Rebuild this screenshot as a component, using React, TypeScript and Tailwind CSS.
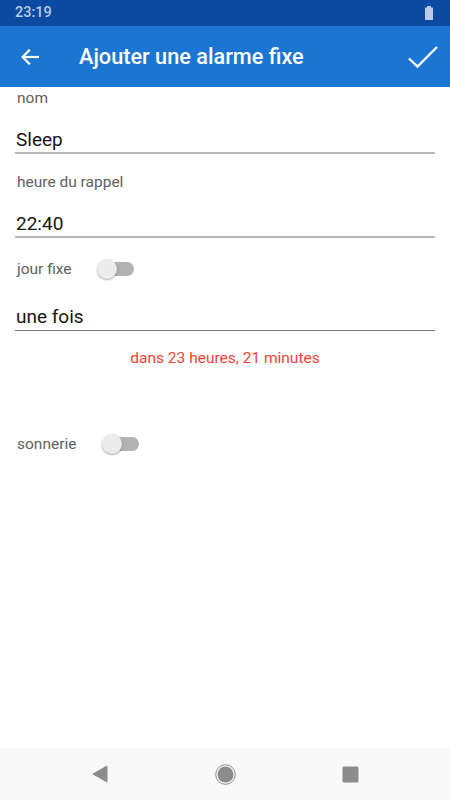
import React from "react";

function Toggle() {
  return (
    <div className="relative w-[37px] h-[22px] shrink-0">
      <div className="absolute left-[3px] right-0 top-[4px] h-[14px] rounded-full bg-[#b2b2b2]" />
      <div className="absolute left-0 top-[1px] w-[20px] h-[20px] rounded-full bg-[#ececec] shadow-[0_1px_2px_rgba(0,0,0,0.35)]" />
    </div>
  );
}

export default function App() {
  return (
    <div
      className="w-[450px] h-[800px] flex flex-col bg-white overflow-hidden"
      style={{ fontFamily: "Roboto, 'Noto Sans', sans-serif" }}
    >
      {/* status bar */}
      <div className="h-[26px] bg-[#0a4aa0] flex items-center justify-between pl-[15px] pr-[17px]">
        <span className="text-[14.5px] font-medium text-[#b9cbe6] leading-none">23:19</span>
        <svg width="8" height="14" viewBox="0 0 8 14">
          <rect x="2" y="0" width="4" height="2" fill="#b9cbe6" />
          <rect x="0" y="1.5" width="8" height="12.5" rx="0.5" fill="#b9cbe6" />
        </svg>
      </div>
      {/* app bar */}
      <div className="h-[61px] bg-[#1b76d3] flex items-center">
        <div className="w-[79px] flex items-center pl-[21px]">
          <svg width="18" height="16" viewBox="0 0 18 16" fill="none" stroke="white" strokeWidth="2.2" strokeLinecap="square">
            <path d="M17 8H2" />
            <path d="M8 1.5L1.6 8L8 14.5" />
          </svg>
        </div>
        <span className="flex-1 text-white text-[21.7px] font-medium leading-none">
          Ajouter une alarme fixe
        </span>
        <div className="pr-[12px] flex items-center">
          <svg width="30" height="22" viewBox="0 0 30 22" fill="none" stroke="white" strokeWidth="2.4">
            <path d="M1 12.5L9.5 20.5L29 1" />
          </svg>
        </div>
      </div>
      {/* content */}
      <div className="flex-1 flex flex-col px-[15px] pt-[3px]">
        <div className="pl-[2px] text-[15.5px] leading-[16px] text-[#616161]">nom</div>
        <div className="mt-[22px] pl-px h-[26px] text-[19px] leading-[24px] text-[#151515] border-b-2 border-[#b7b7b7]">Sleep</div>
        <div className="mt-[20px] pl-[2px] text-[15.5px] leading-[16px] text-[#616161]">heure du rappel</div>
        <div className="mt-[22px] pl-px h-[26px] text-[19px] leading-[24px] text-[#151515] border-b-2 border-[#b7b7b7]">22:40</div>
        <div className="mt-[20px] flex items-center h-[22px]">
          <span className="w-[82px] pl-[2px] text-[15.5px] leading-[16px] text-[#616161]">jour fixe</span>
          <Toggle />
        </div>
        <div className="mt-[25px] pl-px h-[26px] text-[19px] leading-[24px] text-[#151515] border-b-[1.5px] border-[#7a7a7a]">une fois</div>
        <div className="mt-[19px] text-center text-[15.5px] leading-[16px] text-[#f44336]">dans 23 heures, 21 minutes</div>
        <div className="mt-[67px] flex items-center h-[22px]">
          <span className="w-[87px] pl-[2px] text-[15.5px] leading-[16px] text-[#616161]">sonnerie</span>
          <Toggle />
        </div>
      </div>
      {/* nav bar */}
      <div className="h-[52px] bg-[#f9f9f9] flex items-center justify-center">
        <div className="w-[125px] flex justify-center">
          <svg width="16" height="18" viewBox="0 0 16 18">
            <path d="M15 1L1 9L15 17Z" fill="#8c8c8c" stroke="#8c8c8c" strokeLinejoin="round" strokeWidth="1" />
          </svg>
        </div>
        <div className="w-[125px] flex justify-center">
          <svg width="21" height="21" viewBox="0 0 21 21">
            <circle cx="10.5" cy="10.5" r="9.8" fill="none" stroke="#8c8c8c" strokeWidth="1" />
            <circle cx="10.5" cy="10.5" r="8" fill="#8c8c8c" />
          </svg>
        </div>
        <div className="w-[125px] flex justify-center">
          <svg width="17" height="17" viewBox="0 0 17 17">
            <rect x="0.5" y="0.5" width="16" height="16" rx="1.5" fill="#8c8c8c" />
          </svg>
        </div>
      </div>
    </div>
  );
}
